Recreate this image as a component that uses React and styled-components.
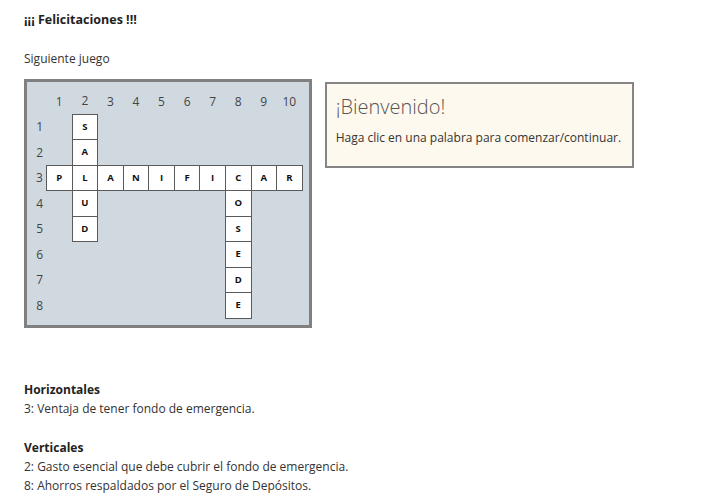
import styled, { createGlobalStyle } from 'styled-components';

const GlobalStyle = createGlobalStyle`
    body {
        margin: 0;
        font-family: "Open Sans", "Noto Sans", sans-serif;
        color: #333;
        background: #fff;
    }
`;

const Page = styled.div`
    padding: 12px 24px 0 24px;
    font-size: 12px;
`;

const Title = styled.h4`
    margin: 0;
    font-size: 12.5px;
    font-weight: bold;
    line-height: 16px;
    color: #222;
`;

const NextGame = styled.p`
    margin: 23px 0 0 0;
    line-height: 16px;
`;

const PuzzleRow = styled.div`
    display: flex;
    align-items: flex-start;
    gap: 13px;
    margin-top: 12px;
`;

const Board = styled.div`
    border: 3px solid #808080;
    background: #d1d9e0;
    padding: 6px;
`;

const Grid = styled.table`
    border-collapse: collapse;
    table-layout: fixed;
`;

const HeadRow = styled.tr`
    height: 26px;
`;

const Row = styled.tr`
    height: 25.5px;
`;

const Head = styled.th`
    width: ${props => props.$label ? '13px' : '25.57px'};
    padding: 0;
    font-weight: normal;
    font-size: 12px;
    color: #444;
    text-align: center;
`;

const RowLabel = styled.td`
    width: 13px;
    padding: 0;
    font-size: 12px;
    color: #444;
    text-align: center;
`;

const Cell = styled.td`
    padding: 0;
    text-align: center;
    font-size: 9.5px;
    font-weight: bold;
    line-height: 12px;
    color: #111;
    background: ${props => props.$on ? '#fff' : 'transparent'};
    border: ${props => props.$on ? '1px solid #5a5a5a' : 'none'};
`;

const Info = styled.div`
    width: 287px;
    height: 82px;
    border: 2px solid #858585;
    background: #fef9ee;
    padding: 0 9px;
    margin-top: 3px;
`;

const Welcome = styled.div`
    font-size: 20px;
    font-weight: 300;
    color: #555;
    margin-top: 10px;
    line-height: 26px;
`;

const Hint = styled.div`
    margin-top: 10px;
    line-height: 16px;
    color: #333;
    white-space: nowrap;
`;

const Clues = styled.div`
    margin-top: 52px;
    line-height: 19px;
`;

const ClueGroup = styled.div`
    & + & {
        margin-top: 20px;
    }
`;

const ClueTitle = styled.div`
    font-weight: bold;
    color: #222;
`;

const words = [
    { row: 3, col: 1, dir: 'h', text: 'PLANIFICAR' },
    { row: 1, col: 2, dir: 'v', text: 'SALUD' },
    { row: 3, col: 8, dir: 'v', text: 'COSEDE' },
];

const buildGrid = () => {
    const g = Array.from({ length: 8 }, () => Array(10).fill(''));
    words.forEach(w => {
        [...w.text].forEach((ch, i) => {
            const r = w.dir === 'h' ? w.row - 1 : w.row - 1 + i;
            const c = w.dir === 'h' ? w.col - 1 + i : w.col - 1;
            g[r][c] = ch;
        });
    });
    return g;
};

const App = () => {
    const grid = buildGrid();
    const cols = Array.from({ length: 10 }, (_, i) => i + 1);

    return (
        <Page>
            <GlobalStyle />
            <Title>¡¡¡ Felicitaciones !!!</Title>
            <NextGame>Siguiente juego</NextGame>

            <PuzzleRow>
                <Board>
                    <Grid>
                        <thead>
                            <HeadRow>
                                <Head $label />
                                {cols.map(c => <Head key={c}>{c}</Head>)}
                            </HeadRow>
                        </thead>
                        <tbody>
                            {grid.map((row, r) => (
                                <Row key={r}>
                                    <RowLabel>{r + 1}</RowLabel>
                                    {row.map((ch, c) => (
                                        <Cell key={c} $on={!!ch}>{ch}</Cell>
                                    ))}
                                </Row>
                            ))}
                        </tbody>
                    </Grid>
                </Board>

                <Info>
                    <Welcome>¡Bienvenido!</Welcome>
                    <Hint>Haga clic en una palabra para comenzar/continuar.</Hint>
                </Info>
            </PuzzleRow>

            <Clues>
                <ClueGroup>
                    <ClueTitle>Horizontales</ClueTitle>
                    <div>3: Ventaja de tener fondo de emergencia.</div>
                </ClueGroup>
                <ClueGroup>
                    <ClueTitle>Verticales</ClueTitle>
                    <div>2: Gasto esencial que debe cubrir el fondo de emergencia.</div>
                    <div>8: Ahorros respaldados por el Seguro de Depósitos.</div>
                </ClueGroup>
            </Clues>
        </Page>
    );
};

export default App;
